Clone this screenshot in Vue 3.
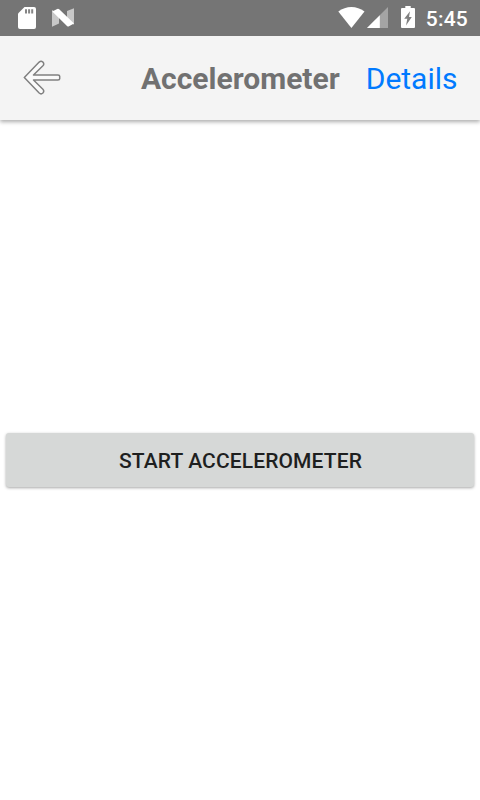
<script setup>
import { ref } from 'vue'

const title = ref('Accelerometer')
const running = ref(false)
</script>

<template>
  <div class="screen">
    <header class="status">
      <div class="group">
        <svg class="sd" width="18" height="22" viewBox="0 0 18 22">
          <path fill="#fff" d="M6.5 0H16Q18 0 18 2V20Q18 22 16 22H2Q0 22 0 20V6.5Z" />
          <path fill="#858585" d="M7 2.2H9V6.6H7ZM10.1 2.2H12.1V6.6H10.1ZM13.2 2.2H15.2V6.6H13.2Z" />
        </svg>
        <svg class="nougat" width="22" height="19" viewBox="0 0 22 19">
          <path fill="#c8c8c8" d="M0 2L7 6V15.5L0 18.7ZM22 0.3V16.7L15 12V3Z" />
          <path fill="#fff" d="M0.3 3.6L5.2 1Q6.3 0.5 7.2 1.3L22 15.4L17 18.3Q16 18.9 15 18Z" />
        </svg>
      </div>
      <div class="group">
        <svg class="wifi" width="28" height="22" viewBox="0 0 28 22">
          <path fill="#fff" d="M0.3 4.6Q6.3 0 13.4 0T26.5 4.6L13.4 21Z" />
        </svg>
        <svg class="signal" width="21" height="21" viewBox="0 0 21 21">
          <path fill="#a4a4a4" d="M21 0V21H0Z" />
          <path fill="#fff" d="M12.8 8.2V21H0Z" />
        </svg>
        <svg class="battery" width="14" height="22" viewBox="0 0 14 22">
          <path fill="#fff" d="M4.3 0H9.7V2H13Q14 2 14 3V21Q14 22 13 22H1Q0 22 0 21V3Q0 2 1 2H4.3Z" />
          <path fill="#808080" d="M9 5.2L3.2 12.8H6.3L5 19.5L10.8 11H8Z" />
        </svg>
        <span class="time">5:45</span>
      </div>
    </header>
    <nav class="bar">
      <svg class="back" width="38" height="36" viewBox="0 0 38 36">
        <path fill="#fafafa" stroke="#808080" stroke-width="1.5" stroke-linejoin="round" d="M1.3 17.5L16.2 2.1Q18 0.4 19.9 2.1Q21.6 4 19.9 5.8L10.5 15H35Q36.7 15 36.7 16.2V18.8Q36.7 20 35 20H10.5L19.9 29.2Q21.6 31 19.9 33Q18 34.7 16.2 33Z" />
      </svg>
      <h1 class="title">{{ title }}</h1>
      <a class="details">Details</a>
    </nav>
    <main class="content">
      <button class="action" @click="running = !running">{{ running ? 'Stop' : 'Start' }} Accelerometer</button>
    </main>
  </div>
</template>

<style>
body { margin: 0; background: #fff; }
</style>

<style scoped>
.screen { width: 480px; height: 800px; display: flex; flex-direction: column; background: #fff; font-family: Roboto, "Liberation Sans", sans-serif; overflow: hidden; }
.status { height: 36px; flex: none; display: flex; justify-content: space-between; background: #757575; padding: 0 12px 0 18px; }
.group { display: flex; align-items: flex-start; }
svg { display: block; flex: none; }
.sd { margin-top: 7px; }
.nougat { margin: 8px 0 0 16px; }
.wifi { margin-top: 7px; }
.signal { margin: 7px 0 0 1px; }
.battery { margin: 6px 0 0 13px; }
.time { margin-left: 11px; color: #fff; font-size: 21px; font-weight: 500; line-height: 38px; letter-spacing: 0.2px; }
.bar { height: 84px; flex: none; display: flex; align-items: center; box-sizing: border-box; padding: 0 22.5px 0 23px; background: #f4f4f4; box-shadow: 0 2px 4px rgba(0, 0, 0, 0.32); clip-path: inset(0 0 -10px 0); }
.back { margin-top: 0; }
.title { margin: 0 26px 0 auto; color: #717171; font-size: 30px; font-weight: 700; line-height: 82px; padding-top: 2px; }
.details { color: #007aff; font-size: 30px; line-height: 82px; padding-top: 2px; }
.content { flex: 1; display: flex; align-items: center; padding: 0 6px; }
.action { width: 100%; height: 54px; border: 0; border-radius: 3px; background: #d6d8d7; color: #1e1f1f; font: 500 21px/52px Roboto, "Liberation Sans", sans-serif; letter-spacing: 0.12px; text-transform: uppercase; padding: 2px 0 0 1px; box-shadow: 0 1px 3px rgba(0, 0, 0, 0.35); }
</style>
